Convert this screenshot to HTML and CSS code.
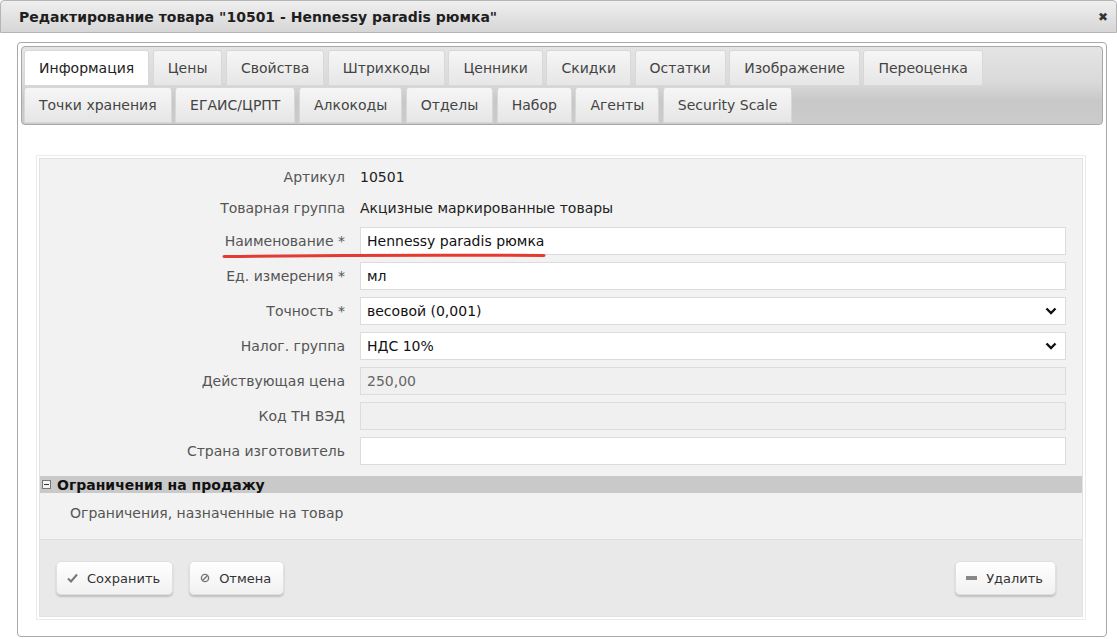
FILE: index.html
```html
<!DOCTYPE html>
<html lang="ru">
<head>
    <meta charset="UTF-8">
    <title>Редактирование товара</title>
    <link rel="stylesheet" href="styles.css">
</head>
<body>
    <div class="dialog-title">
        <span>Редактирование товара "10501 - Hennessy paradis рюмка"</span>
        <span class="close">&#10006;</span>
    </div>
    <div class="dialog-body">
        <div class="panel">
            <div class="tabs">
                <div class="tab-row">
                    <div class="tab active">Информация</div>
                    <div class="tab">Цены</div>
                    <div class="tab">Свойства</div>
                    <div class="tab">Штрихкоды</div>
                    <div class="tab">Ценники</div>
                    <div class="tab">Скидки</div>
                    <div class="tab">Остатки</div>
                    <div class="tab">Изображение</div>
                    <div class="tab">Переоценка</div>
                </div>
                <div class="tab-row">
                    <div class="tab">Точки хранения</div>
                    <div class="tab">ЕГАИС/ЦРПТ</div>
                    <div class="tab">Алкокоды</div>
                    <div class="tab">Отделы</div>
                    <div class="tab">Набор</div>
                    <div class="tab">Агенты</div>
                    <div class="tab">Security Scale</div>
                </div>
            </div>

            <div class="form">
                <div class="fields">
                    <div class="label">Артикул</div>
                    <div class="value">10501</div>

                    <div class="label">Товарная группа</div>
                    <div class="value">Акцизные маркированные товары</div>

                    <div class="label">Наименование *</div>
                    <div class="field">Hennessy paradis рюмка</div>

                    <div class="label">Ед. измерения *</div>
                    <div class="field">мл</div>

                    <div class="label">Точность *</div>
                    <div class="field select">весовой (0,001)
                        <svg class="chevron" width="12" height="8" viewBox="0 0 12 8"><path d="M1.5 1.5 L6 6 L10.5 1.5" fill="none" stroke="#111" stroke-width="2.4"/></svg>
                    </div>

                    <div class="label">Налог. группа</div>
                    <div class="field select">НДС 10%
                        <svg class="chevron" width="12" height="8" viewBox="0 0 12 8"><path d="M1.5 1.5 L6 6 L10.5 1.5" fill="none" stroke="#111" stroke-width="2.4"/></svg>
                    </div>

                    <div class="label">Действующая цена</div>
                    <div class="field disabled">250,00</div>

                    <div class="label">Код ТН ВЭД</div>
                    <div class="field disabled"></div>

                    <div class="label">Страна изготовитель</div>
                    <div class="field"></div>
                </div>

                <div class="section-head">
                    <svg class="toggle" width="9" height="9" viewBox="0 0 9 9"><rect x="0.5" y="0.5" width="8" height="8" fill="#f4f4f4" stroke="#777"/><path d="M2 4.5 H7" stroke="#333"/></svg>
                    Ограничения на продажу
                </div>
                <div class="section-text">Ограничения, назначенные на товар</div>

                <div class="buttons">
                    <button class="btn">
                        <svg width="11" height="10" viewBox="0 0 11 10"><path d="M1 5.5 L4 8.5 L10 1.5" fill="none" stroke="#777" stroke-width="2"/></svg>
                        Сохранить
                    </button>
                    <button class="btn">
                        <svg width="10" height="10" viewBox="0 0 10 10"><circle cx="5" cy="5" r="3.6" fill="none" stroke="#777" stroke-width="1.4"/><path d="M2.6 7.4 L7.4 2.6" stroke="#777" stroke-width="1.4"/></svg>
                        Отмена
                    </button>
                    <button class="btn right">
                        <svg width="11" height="6" viewBox="0 0 11 6"><rect x="0" y="1" width="11" height="4" fill="#888"/></svg>
                        Удалить
                    </button>
                </div>

                <svg class="mark" width="330" height="8" viewBox="0 0 330 8"><path d="M2 4.5 Q160 2.5 322 3.5" fill="none" stroke="#e33a32" stroke-width="3" stroke-linecap="round"/></svg>
            </div>
        </div>
    </div>
</body>
</html>
```

FILE: styles.css
```css
body {
    margin: 0;
    font-family: "DejaVu Sans", Verdana, sans-serif;
    font-size: 14px;
    color: #222;
    background: #fff;
}
.dialog-title {
    height: 31px;
    display: flex;
    align-items: center;
    justify-content: space-between;
    padding: 0 8px 0 18px;
    border: 1px solid #b5b5b5;
    border-radius: 4px 4px 0 0;
    background: linear-gradient(#efefef, #d6d6d6);
    font-weight: bold;
    color: #1e1e1e;
}
.close {
    font-size: 12px;
    color: #333;
}
.dialog-body {
    padding: 9px 10px 0 17px;
}
.panel {
    border: 1px solid #a8a8a8;
    border-radius: 4px;
    padding: 3px 3px 16px 3px;
    height: 574px;
}
.tabs {
    border: 1px solid #a8a8a8;
    border-radius: 4px;
    background: linear-gradient(#e4e4e4 0%, #dadada 45%, #c8c8c8 70%, #cbcbcb 100%);
    padding: 3px 2px 1px 2px;
    display: flex;
    flex-direction: column;
    gap: 1px;
}
.tab-row {
    display: flex;
    gap: 3.5px;
}
.tab {
    height: 36px;
    box-sizing: border-box;
    display: flex;
    align-items: center;
    padding: 0 14px;
    border: 1px solid #d8d8d8;
    border-radius: 3px 3px 0 0;
    background: linear-gradient(#f6f6f6, #e6e6e6);
    color: #444;
}
.tab.active {
    background: #fff;
    color: #222;
}
.form {
    position: relative;
    margin: 33px 20px 0 18px;
    background: #f2f2f2;
    border: 1px solid #e2e2e2;
    box-shadow: 0 0 0 2px #fff, 0 0 0 3px #ececec;
}
.fields {
    display: grid;
    grid-template-columns: 305px 1fr;
    column-gap: 15px;
    row-gap: 7px;
    padding: 6px 16px 11px 0;
    align-items: center;
}
.label {
    text-align: right;
    color: #555;
    line-height: 24px;
}
.value {
    color: #222;
    line-height: 24px;
}
.field {
    height: 28px;
    box-sizing: border-box;
    background: #fff;
    border: 1px solid #dcdcdc;
    padding: 0 6px;
    display: flex;
    align-items: center;
    justify-content: space-between;
    color: #111;
}
.field.disabled {
    background: #f0f0f0;
    color: #666;
}
.chevron {
    margin-right: 2px;
}
.section-head {
    display: flex;
    align-items: center;
    gap: 6px;
    height: 17px;
    padding-left: 2px;
    background: #c9c9c9;
    font-weight: bold;
    color: #111;
}
.section-text {
    padding: 12px 0 18px 30px;
    color: #555;
    border-bottom: 1px solid #dedede;
}
.buttons {
    display: flex;
    gap: 16px;
    padding: 21px 26px 21px 16px;
    background: #e9e9e9;
}
.btn {
    height: 34px;
    padding: 0 12px 0 10px;
    display: flex;
    align-items: center;
    gap: 9px;
    font-family: inherit;
    font-size: 13px;
    color: #333;
    border: 1px solid #e0e0e0;
    border-radius: 5px;
    background: linear-gradient(#ffffff, #f1f1f1);
    box-shadow: 0 2px 2px rgba(0, 0, 0, 0.18);
}
.btn.right {
    margin-left: auto;
}
.mark {
    position: absolute;
    left: 182px;
    top: 93px;
}
```
